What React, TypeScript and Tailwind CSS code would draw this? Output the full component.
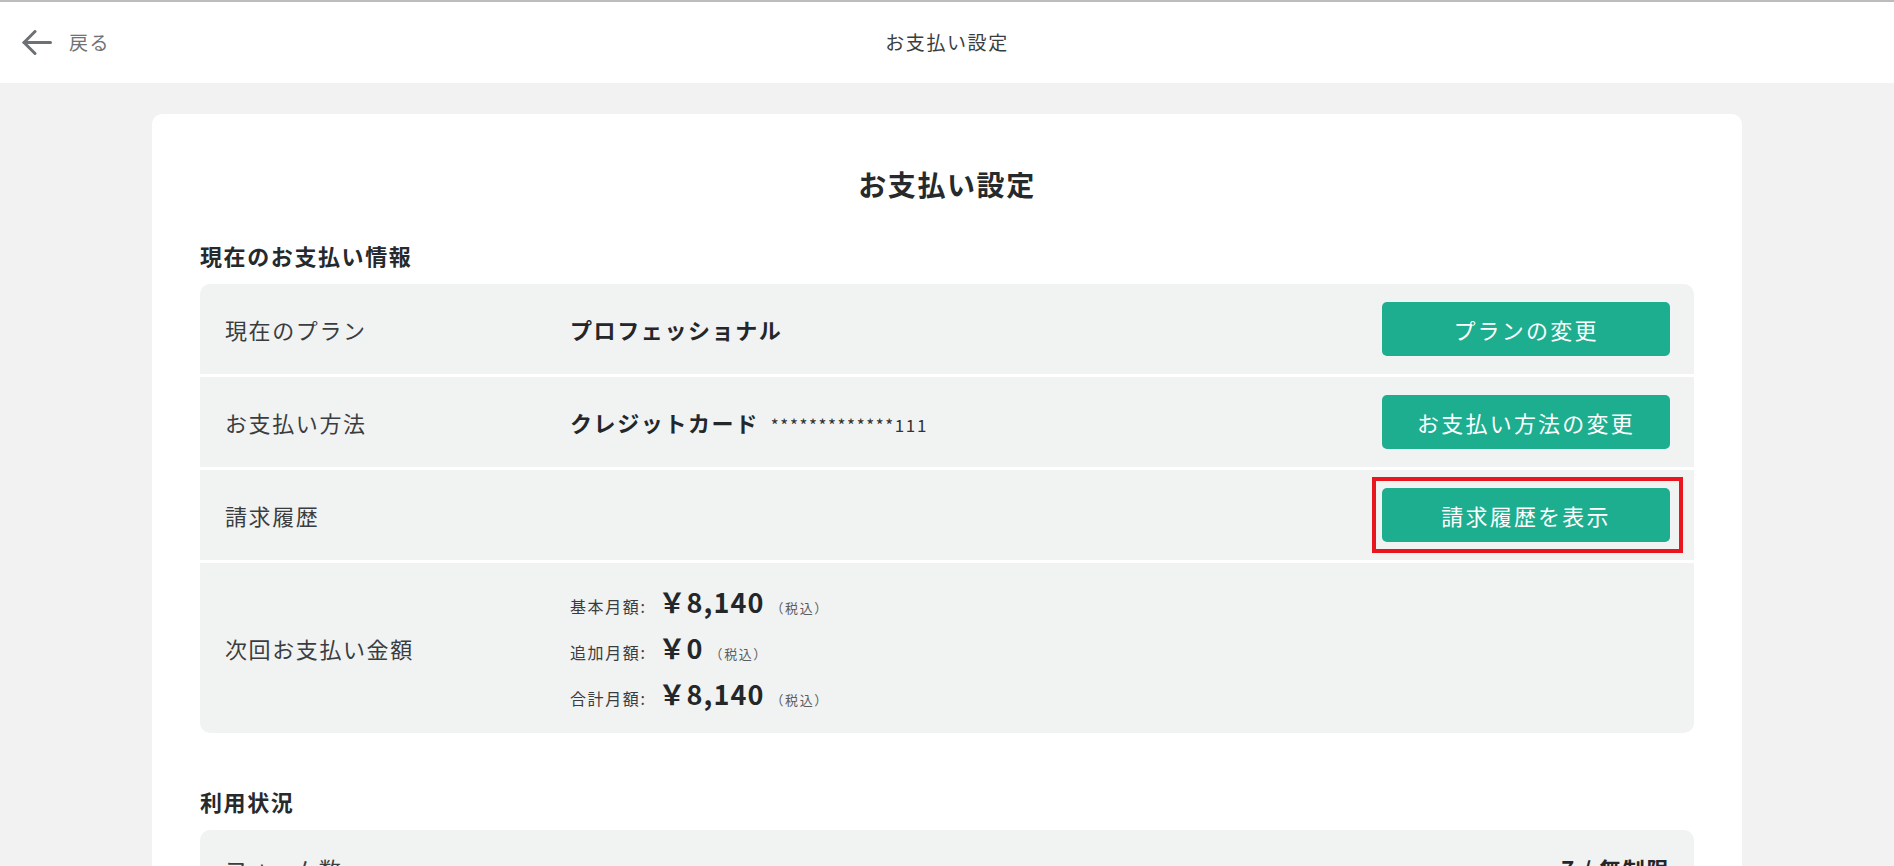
import React from 'react';

const FONT = { fontFamily: '"Noto Sans CJK JP", "Noto Sans", sans-serif' };

type Row = { label: string; value?: React.ReactNode; button?: string; marked?: boolean };

const paymentRows: Row[] = [
  { label: '現在のプラン', value: <span className="font-bold text-[#23272a]">プロフェッショナル</span>, button: 'プランの変更' },
  {
    label: 'お支払い方法',
    value: (
      <span className="flex items-baseline">
        <span className="font-bold text-[#23272a]">クレジットカード</span>
        <span className="ml-[12px] text-[17px] text-[#333]">*************111</span>
      </span>
    ),
    button: 'お支払い方法の変更',
  },
  { label: '請求履歴', button: '請求履歴を表示', marked: true },
];

const amounts = [
  { label: '基本月額:', price: '￥8,140' },
  { label: '追加月額:', price: '￥0' },
  { label: '合計月額:', price: '￥8,140' },
];

const usage = [
  { label: 'フォーム数', value: '7 / 無制限' },
  { label: '回答数', value: '120 / 無制限' },
];

function BackArrow() {
  return (
    <svg width="30" height="25" viewBox="0 0 30 25" fill="none" stroke="#6c7176" strokeWidth="3" strokeLinecap="round" strokeLinejoin="round">
      <path d="M13 1.5 L2 12.5 L13 23.5" />
      <path d="M2 12.5 H28.5" />
    </svg>
  );
}

function GreenButton({ text, marked }: { text: string; marked?: boolean }) {
  return (
    <div className="relative shrink-0">
      <button className="w-[288px] h-[54px] rounded-[5px] bg-[#1cae8f] text-white text-[22px] tracking-[0.1em]">
        {text}
      </button>
      {marked && (
        <span className="absolute -left-[10px] -right-[13px] -top-[11px] -bottom-[11px] border-4 border-[#e8161e] pointer-events-none" />
      )}
    </div>
  );
}

function InfoRow({ row }: { row: Row }) {
  return (
    <div className="flex items-center h-[90px] bg-[#f1f2f2] pl-[25px] pr-[24px]">
      <div className="w-[345px] shrink-0 text-[22px] text-[#3a3d40]">{row.label}</div>
      <div className="flex-1 text-[22px]">{row.value}</div>
      {row.button && <GreenButton text={row.button} marked={row.marked} />}
    </div>
  );
}

export default function App() {
  return (
    <div className="min-h-screen bg-[#f2f2f2] tracking-[0.1em]" style={FONT}>
      <header className="h-[83px] border-t-2 border-[#bcbcbc] bg-white grid grid-cols-[1fr_auto_1fr] items-center">
        <div className="flex items-center pl-[22px] gap-[17px]">
          <BackArrow />
          <span className="text-[19px] text-[#6f7377]">戻る</span>
        </div>
        <div className="text-[19px] text-[#3a3d40]">お支払い設定</div>
        <div />
      </header>

      <main className="w-[1590px] mx-auto mt-[31px] bg-white rounded-[10px] px-[48px] pt-[49px] pb-[60px]">
        <h1 className="text-center text-[28px] leading-[42px] font-bold text-[#262a2d]">お支払い設定</h1>

        <h2 className="mt-[33px] text-[22px] leading-[34px] font-bold text-[#262a2d]">現在のお支払い情報</h2>
        <div className="mt-[12px] rounded-[10px] overflow-hidden flex flex-col gap-[3px]">
          {paymentRows.map((row) => (
            <InfoRow key={row.label} row={row} />
          ))}
          <div className="flex items-center h-[170px] bg-[#f1f2f2] pl-[25px] pr-[24px]">
            <div className="w-[345px] shrink-0 text-[22px] text-[#3a3d40]">次回お支払い金額</div>
            <div className="flex flex-col">
              {amounts.map((a) => (
                <div key={a.label} className="flex items-baseline h-[46px] leading-[46px]">
                  <span className="text-[16px] text-[#3a3d40]">{a.label}</span>
                  <span className="ml-[12px] text-[27px] font-bold text-[#23272a] tracking-[0.04em]">{a.price}</span>
                  <span className="ml-[6px] text-[13px] text-[#5a5e62]">（税込）</span>
                </div>
              ))}
            </div>
          </div>
        </div>

        <h2 className="mt-[51px] text-[22px] leading-[34px] font-bold text-[#262a2d]">利用状況</h2>
        <div className="mt-[12px] rounded-[10px] overflow-hidden flex flex-col gap-[3px]">
          {usage.map((u) => (
            <div key={u.label} className="flex items-center h-[76px] bg-[#f1f2f2] pl-[25px] pr-[24px]">
              <div className="w-[345px] shrink-0 text-[22px] text-[#3a3d40]">{u.label}</div>
              <div className="flex-1" />
              <div className="text-[22px] font-bold text-[#23272a]">{u.value}</div>
            </div>
          ))}
        </div>
      </main>
    </div>
  );
}
